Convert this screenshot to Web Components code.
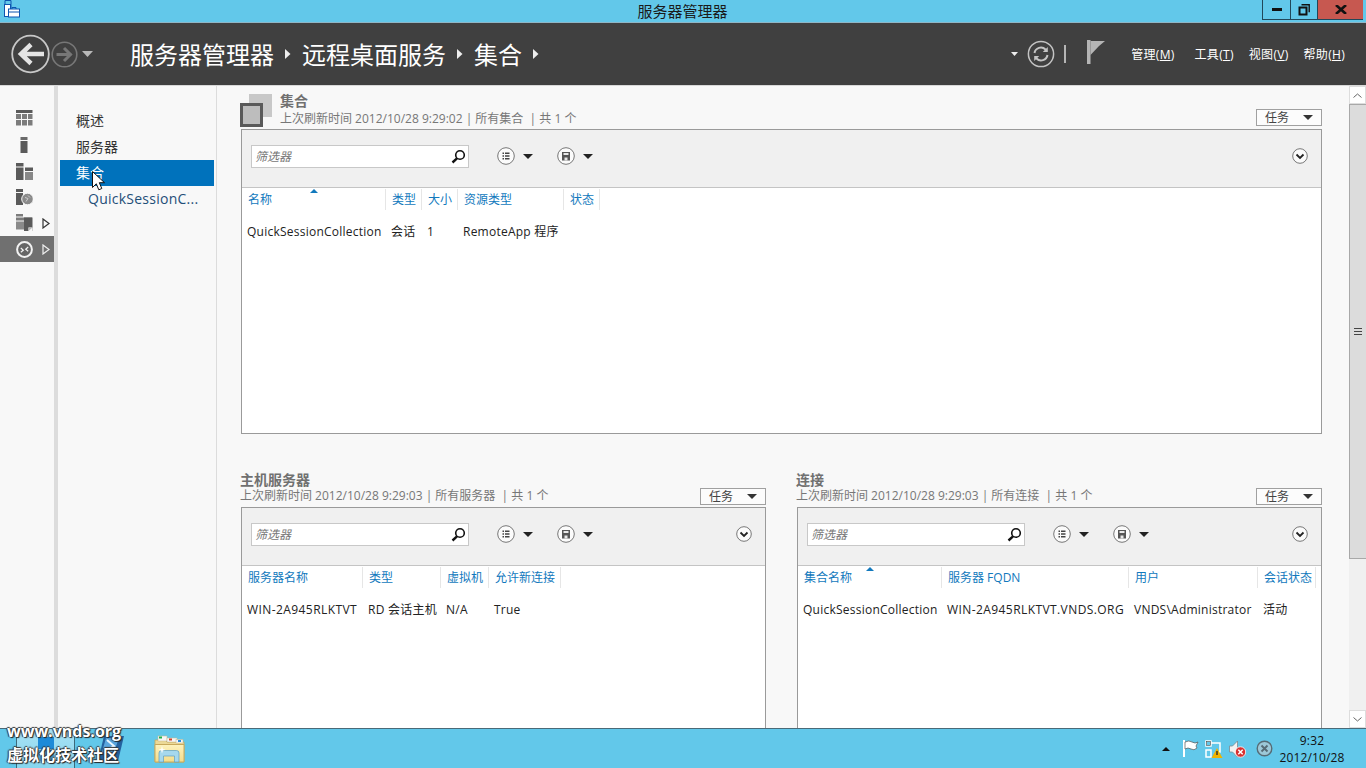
<!DOCTYPE html>
<html lang="zh-CN"><head><meta charset="utf-8"><title>服务器管理器</title>
<style>
html,body{margin:0;padding:0;height:100%;overflow:hidden}
body{width:1366px;height:768px;display:flex;flex-direction:column;position:relative;font:12px "Open Sans","Noto Sans CJK SC",sans-serif;color:#222;background:#f8f8f8}
.body{flex:1;display:flex;min-height:0;border-top:1px solid #d8d8d8}
</style></head><body>
<win-titlebar>服务器管理器</win-titlebar>
<nav-header></nav-header>
<div class="body">
  <icon-rail></icon-rail>
  <nav-list></nav-list>
  <main-area>
    <tile-section icon title="集合" sub="上次刷新时间 2012/10/28 9:29:02 | 所有集合  | 共 1 个" style="width:1081px">
      <data-grid h="305" cols="名称:144:sort|类型:36|大小:36|资源类型:106|状态:36" row="QuickSessionCollection|会话|1|RemoteApp 程序"></data-grid>
    </tile-section>
    <two-cols>
      <tile-section title="主机服务器" sub="上次刷新时间 2012/10/28 9:29:03 | 所有服务器  | 共 1 个" style="width:525px">
        <data-grid h="300" cols="服务器名称:121|类型:78|虚拟机:48|允许新连接:72" row="WIN-2A945RLKTVT|RD 会话主机|N/A|True"></data-grid>
      </tile-section>
      <tile-section title="连接" sub="上次刷新时间 2012/10/28 9:29:03 | 所有连接  | 共 1 个" style="width:525px">
        <data-grid h="300" cols="集合名称:144:sort|服务器 FQDN:187|用户:129|会话状态:58" row="QuickSessionCollection|WIN-2A945RLKTVT.VNDS.ORG|VNDS\Administrator|活动"></data-grid>
      </tile-section>
    </two-cols>
  </main-area>
  <v-scroll></v-scroll>
</div>
<task-bar></task-bar>
<water-mark></water-mark>
<mouse-cursor></mouse-cursor>
<script>
const FONT='"Open Sans","Noto Sans CJK SC",sans-serif';
function def(name,html){
  customElements.define(name,class extends HTMLElement{
    connectedCallback(){ if(this.shadowRoot) return;
      const s=this.attachShadow({mode:'open'});
      s.innerHTML=typeof html==='function'?html(this):html;
    }
  });
}
def('win-titlebar',`<style>
:host{display:flex;height:23px;flex:none;background:#62c8ea;box-sizing:border-box;border-bottom:1px solid #8fb6c6;position:relative;font:15px ${FONT};color:#1a1a1a}
.ic{width:18px;height:18px;margin:0 0 0 2px;flex:none}
.t{position:absolute;left:0;right:1px;top:2px;text-align:center;line-height:18px;}
.ctl{margin-left:auto;margin-right:3px;display:flex;height:20px;position:relative;box-sizing:border-box;border:1px solid #21485a;border-top:0;border-right:0}
.ctl div{display:flex;align-items:center;justify-content:center;box-sizing:border-box}
.a{width:28px;border-right:1px solid #21485a}.b{width:26px}.c{width:46px;background:#c75850;border-left:1px solid #21485a}
</style>
<svg class="ic" viewBox="0 0 18 18"><path d="M3 .5h6v4H3zM3 4.500h6v4H3z" fill="#62c8ea" stroke="#0d55b0"/><rect x="2.500" y="4.500" width="6" height="12" fill="#fff" stroke="#0d55b0"/><rect x="6.500" y="9" width="11" height="8" fill="#fff" stroke="#0d55b0"/><path d="M10 9V7.500h4V9M7 12h10" stroke="#0d55b0" fill="none"/></svg>
<div class="t"><slot></slot></div>
<div class="ctl"><div class="a"><svg width="10" height="3"><rect width="10" height="3" fill="#111"/></svg></div>
<div class="b"><svg width="12" height="12" viewBox="0 0 12 12"><path d="M3.500 .8h7.700v7.500" fill="none" stroke="#111" stroke-width="1.400"/><rect x="1.500" y="3.500" width="7" height="7" fill="none" stroke="#111" stroke-width="2"/></svg></div>
<div class="c"><svg width="12" height="9" viewBox="0 0 12 9"><path d="M1 0l10 9M11 0L1 9" stroke="#111" stroke-width="2.600"/></svg></div></div>`);

def('nav-header',`<style>
:host{display:flex;align-items:center;height:62px;flex:none;background:#404040;color:#fff;font:12px ${FONT};box-sizing:border-box;padding-left:11px}
svg{flex:none;display:block}
.crumb{font-size:24px;line-height:32px;color:#fff;margin-top:1px}
.arr{margin:0 11px 0 11px}
.m{display:flex;align-items:center;margin-left:auto;margin-right:21px;}
.menu{white-space:nowrap;color:#fff;font-size:12px;letter-spacing:.3px}
u{text-underline-offset:1px}
</style>
<svg width="40" height="40" viewBox="0 0 40 40"><circle cx="19.500" cy="20" r="18.300" fill="none" stroke="#c8c8c8" stroke-width="1.800"/><path d="M33 20H11M20 10.500L10 20l10 9.500" fill="none" stroke="#e4e4e4" stroke-width="4.500"/></svg>
<svg style="margin-left:0" width="27" height="27" viewBox="0 0 27 27"><circle cx="13.500" cy="13.500" r="12.300" fill="none" stroke="#777" stroke-width="1.600"/><path d="M5.500 13.500h15M13 7l6.500 6.500L13 20" fill="none" stroke="#777" stroke-width="3"/></svg>
<svg style="margin:0 37px 0 4px" width="11" height="6"><path d="M0 0h11L5.500 6z" fill="#b8b8b8"/></svg>
<span class="crumb">服务器管理器</span>
<svg class="arr" width="6" height="10" style="margin-left:11px"><path d="M0 0l5.500 5L0 10z" fill="#eee"/></svg>
<span class="crumb" style="margin-left:0">远程桌面服务</span>
<svg class="arr" width="6" height="10"><path d="M0 0l5.500 5L0 10z" fill="#eee"/></svg>
<span class="crumb">集合</span>
<svg class="arr" width="6" height="10"><path d="M0 0l5.500 5L0 10z" fill="#eee"/></svg>
<div class="m">
<svg width="7" height="4" style="margin-right:9px"><path d="M0 0h7L3.500 4z" fill="#eee"/></svg>
<svg width="28" height="28" viewBox="0 0 28 28"><circle cx="14" cy="14" r="12.600" fill="none" stroke="#c4c4c4" stroke-width="1.500"/><path d="M7.500 13a6.500 6.500 0 0 1 11-3.500l1 1.500M20.500 15a6.500 6.500 0 0 1-11 3.500l-1-1.500" fill="none" stroke="#c4c4c4" stroke-width="2"/><path d="M20.800 7v5h-5zM7.200 21v-5h5z" fill="#c4c4c4"/></svg>
<svg width="2" height="18" style="margin:0 21px 0 9px"><rect width="2" height="18" fill="#b5b5b5"/></svg>
<svg width="18" height="24" viewBox="0 0 18 24" style="margin-right:26px;margin-top:-4px"><rect width="3.500" height="24" fill="#b5b5b5"/><path d="M3.500 1H18l-6 5-8.500 9z" fill="#b5b5b5"/></svg>
<span class="menu">管理(<u>M</u>)</span><span class="menu" style="margin-left:20px">工具(<u>T</u>)</span><span class="menu" style="margin-left:15px">视图(<u>V</u>)</span><span class="menu" style="margin-left:15px">帮助(<u>H</u>)</span>
</div>`);

const tri=(c)=>`<svg class="t" width="8" height="11" viewBox="0 0 8 11"><path d="M1 1l6 4.500L1 10z" fill="none" stroke="${c}" stroke-width="1.200"/></svg>`;
def('icon-rail',`<style>
:host{display:block;width:58px;flex:none;box-sizing:border-box;border-right:4px solid #dcdcdc;padding-top:20px;background:#f8f8f8}
.r{height:26px;display:flex;align-items:center;padding-left:16px;position:relative;box-sizing:border-box}
.r svg:first-child{display:block}
.up svg:first-child{margin-top:-2px}
.t{position:absolute;left:42px;top:8px}
.sel{background:#707070;height:26px}
</style>
<div class="r up"><svg width="17" height="16" viewBox="0 0 17 16"><path d="M0 0h16.500v3H0z" fill="#5a5a5a"/><path d="M0 4h5v5H0zM6 4h5v5H6zM12 4h4.500v5H12zM0 10h5v5.500H0zM6 10h5v5.500H6zM12 10h4.500v5.500H12z" fill="#7c7c7c"/></svg></div>
<div class="r"><svg width="17" height="16" viewBox="0 0 17 16"><path d="M4.500 0h7v3h-7z" fill="#6a6a6a"/><path d="M4.500 4h7v12h-7z" fill="#5a5a5a"/></svg></div>
<div class="r"><svg width="17" height="17" viewBox="0 0 17 17"><path d="M0 0h7.500v3.500H0z" fill="#5a5a5a"/><path d="M0 4.500h7.500V17H0z" fill="#5a5a5a"/><path d="M9 4.500h8V8H9z" fill="#5a5a5a"/><path d="M9 9h8v8H9z" fill="#888"/></svg></div>
<div class="r"><svg width="17" height="17" viewBox="0 0 17 17"><path d="M0 0h7v3H0z" fill="#5a5a5a"/><path d="M0 4h7v12H0z" fill="#5a5a5a"/><circle cx="11.500" cy="10" r="5.800" fill="#8a8a8a" stroke="#f8f8f8"/><path d="M9 8.500l3 1-2 3M12 6.500l2 2" stroke="#ccc" fill="none"/></svg></div>
<div class="r up"><svg width="17" height="17" viewBox="0 0 17 17"><path d="M0 0h7v2.500H0z" fill="#7c7c7c"/><path d="M0 3.500h16v3H0z" fill="#7c7c7c"/><path d="M0 7.500h9v8H0z" fill="#8a8a8a"/><path d="M8 3.500h8.500V17H8z" fill="#5a5a5a"/><path d="M12.500 17v-3.500h4V17z" fill="#f8f8f8"/><path d="M12.500 17l4-3.500h-4z" fill="#bbb"/></svg>${tri('#333')}</div>
<div class="r sel"><svg width="17" height="17" viewBox="0 0 17 17"><circle cx="8.500" cy="8.500" r="7.400" fill="#666" stroke="#f2f2f2" stroke-width="2"/><path d="M4.800 7l2.500 2.200-2.500 2M12.200 6L9.700 8.200l2.500 2" fill="none" stroke="#f2f2f2" stroke-width="1.200"/></svg>${tri('#eee')}</div>`);

def('nav-list',`<style>
:host{display:block;width:159px;flex:none;box-sizing:border-box;border-right:1px solid #dcdcdc;padding:22px 2px 0 2px;font:14px/26px ${FONT};color:#333}
div{height:26px;padding-left:16px;white-space:nowrap}
.sel{background:#0072bc;color:#fff}
.sub{padding-left:28px;color:#1f4f78;letter-spacing:.25px}
</style>
<div>概述</div><div>服务器</div><div class="sel">集合</div><div class="sub">QuickSessionC...</div>`);

def('main-area',`<style>
:host{flex:1;display:block;min-width:0;box-sizing:border-box;padding:8px 0 0 24px;overflow:hidden;background:#f8f8f8}
</style><slot></slot>`);

def('two-cols',`<style>:host{display:flex;gap:31px;margin-top:39px}</style><slot></slot>`);

def('tile-section',h=>{const ic=h.hasAttribute('icon');return `<style>
:host{display:block;font:12px ${FONT}}
.hd{display:flex;height:${ic?35:34}px;align-items:flex-start;position:relative}
.ic{flex:none;margin:0 7px 0 -1px}
.tt{flex:1;min-width:0;${ic?'':'margin-left:-1px'}}
.title{font-weight:700;color:#707070;line-height:16px;font-size:14px;white-space:nowrap;margin:-1px 0 ${ic?1:0}px}
.sub{color:#777;line-height:${ic?17:16}px;white-space:pre}
.task{flex:none;width:66px;height:17px;box-sizing:border-box;border:1px solid #a0a0a0;background:#fcfcfc;display:flex;align-items:center;padding-left:8px;margin-top:15px;color:#444;line-height:14px}
.task svg{margin-left:auto;margin-right:8px}
</style><div class="hd">
${ic?`<svg class="ic" width="33" height="34" viewBox="0 0 33 34"><rect x="9" y="0" width="23" height="23" fill="#c8c8c8"/><rect x="1.500" y="10.500" width="20" height="21" fill="#bdbdbd" stroke="#5a5a5a" stroke-width="3"/></svg>`:''}
<div class="tt"><div class="title">${h.getAttribute('title')}</div><div class="sub">${h.getAttribute('sub')}</div></div>
<div class="task">任务<svg width="10" height="5"><path d="M0 0h10L5 5z" fill="#333"/></svg></div></div><slot></slot>`});

def('data-grid',h=>{
 const cols=h.getAttribute('cols').split('|').map(c=>c.split(':'));
 const row=h.getAttribute('row').split('|');
 const W=cols.map(c=>+c[1]);
 return `<style>
:host{display:block;box-sizing:border-box;height:${h.getAttribute('h')}px;border:1px solid #9a9a9a;background:#fff;font:12px ${FONT}}
.bar{height:58px;box-sizing:border-box;background:#f0f0f0;border-bottom:1px solid #c4c4c4;display:flex;align-items:center;padding:0 13px 5px 9px}
.f{width:218px;height:23px;box-sizing:border-box;border:1px solid #c8c8c8;background:#fff;display:flex;align-items:center;justify-content:space-between;padding:0 2px 0 3px;font-style:italic;color:#777;margin-right:28px}
.b{display:flex;align-items:center;gap:8px;margin-right:24px}
.last{margin-left:auto}
.hdr,.rw{display:flex}
.hdr{height:21px;margin-top:1px}
.hdr div{position:relative;box-sizing:border-box;padding:3px 0 0 6px;color:#1279bd;border-right:1px solid #e6e6e6;white-space:nowrap;line-height:16px;overflow:visible}
.s{position:absolute;top:0;left:50%;margin-left:-4px}
.rw{margin-top:13px;color:#222;line-height:18px}
.rw div{padding-left:5px;box-sizing:border-box;white-space:nowrap;letter-spacing:.24px}
.rw div.up{letter-spacing:.42px}
svg{display:block}
</style><div class="bar">
<div class="f">筛选器<svg width="15" height="15" viewBox="0 0 15 15"><circle cx="9" cy="6" r="4.300" fill="none" stroke="#111" stroke-width="1.600"/><path d="M6 9.300L1.500 13.500" stroke="#111" stroke-width="2.400"/></svg></div>
<div class="b"><svg width="18" height="18" viewBox="0 0 18 18"><circle cx="9" cy="9" r="8.300" fill="#fbfbfb" stroke="#777"/><path d="M5.500 5.500H7v1.500H5.500zM5.500 8.300H7v1.500H5.500zM5.500 11H7v1.500H5.500zM8 5.500h4.500v1.500H8zM8 8.300h4.500v1.500H8zM8 11h4.500v1.500H8z" fill="#444"/></svg><svg width="10" height="5"><path d="M0 0h10L5 5z" fill="#222"/></svg></div>
<div class="b"><svg width="18" height="18" viewBox="0 0 18 18"><circle cx="9" cy="9" r="8.300" fill="#fbfbfb" stroke="#777"/><path d="M5 5h8v8.500H5z" fill="#555"/><path d="M6.500 6h5v2h-5zM7.500 10.500h3v3h-3z" fill="#e8e8e8"/></svg><svg width="10" height="5"><path d="M0 0h10L5 5z" fill="#222"/></svg></div>
<svg class="last" width="16" height="16" viewBox="0 0 16 16"><circle cx="8" cy="8" r="7.300" fill="#fbfbfb" stroke="#777"/><path d="M4.500 6.500L8 10l3.500-3.500" fill="none" stroke="#222" stroke-width="1.800"/></svg>
</div>
<div class="hdr">${cols.map(c=>`<div style="width:${c[1]}px">${c[0]}${c[2]?'<svg class="s" width="8" height="4"><path d="M0 4h8L4 0z" fill="#1279bd"/></svg>':''}</div>`).join('')}</div>
<div class="rw">${row.map((t,i)=>`<div class="${/^WIN/.test(t)?'up':''}" style="width:${W[i]}px">${t}</div>`).join('')}</div>`;
});

def('v-scroll',`<style>
:host{width:17px;flex:none;display:flex;flex-direction:column;background:#f0f0f0;margin-top:0}
.btn{height:18px;background:#fff;border:1px solid #ddd;box-sizing:border-box;display:flex;align-items:center;justify-content:center;flex:none}
.th{height:455px;background:#dcdcdc;border:1px solid #a8a8a8;border-right:0;box-sizing:border-box;display:flex;align-items:center;justify-content:center;flex:none}
.gap{flex:1}
</style><div class="btn"><svg width="9" height="5" viewBox="0 0 9 5"><path d="M.5 4.500l4-3.500 4 3.500" fill="none" stroke="#666"/></svg></div>
<div class="th"><svg width="8" height="7" viewBox="0 0 8 7"><path d="M0 .5h8M0 3.500h8M0 6.500h8" stroke="#444"/></svg></div><div class="gap"></div>
<div class="btn"><svg width="9" height="5" viewBox="0 0 9 5"><path d="M.5.500l4 3.500 4-3.500" fill="none" stroke="#666"/></svg></div>`);

def('task-bar',`<style>
:host{display:flex;align-items:center;height:40px;flex:none;box-sizing:border-box;background:#62c8ea;border-top:1px solid #4a6a78;font:12px ${FONT};color:#111}
.st{width:59px;height:39px;margin-left:16px;background:linear-gradient(#a9e2f4,#86d6ef);border:solid #3d6a7a;border-width:0 1px;box-sizing:border-box;flex:none;display:flex;justify-content:center;padding-top:8px}
.ps{margin-left:22px;flex:none}.ex{margin-left:29px;flex:none}
.tray{margin-left:auto;display:flex;align-items:center}
.clk{width:72px;text-align:center;line-height:17px;margin:0 18px 0 3px;color:#111;font-size:12px;letter-spacing:.15px}
svg{display:block;flex:none}
</style>
<div class="st"><svg width="16" height="24"><rect width="16" height="12" fill="#1d8ad8"/><rect y="13" width="16" height="11" fill="#4aa6dc"/></svg></div>
<svg class="ps" width="28" height="27" viewBox="0 0 28 27"><path d="M7 1h20l-6 25H1z" fill="#24619e"/><path d="M9 3h13l-5 14H5z" fill="#5aa6de"/><path d="M10 5l7 6-9 5" fill="none" stroke="#e8f6ff" stroke-width="2"/></svg>
<svg class="ex" width="32" height="30" viewBox="0 0 32 30"><defs><linearGradient id="fg" x1="0" y1="0" x2="0" y2="1"><stop offset="0" stop-color="#fdf2bd"/><stop offset="1" stop-color="#f5dc8a"/></linearGradient></defs><path d="M1 6h10l2 2h17v20H1z" fill="#ecd996" stroke="#c8a95c" stroke-width=".8"/><rect x="4" y="2" width="9" height="5" fill="#f6f6f6" stroke="#c8b88a" stroke-width=".5"/><rect x="5" y="2.500" width="3" height="2" fill="#22b14c"/><rect x="13" y="4" width="10" height="4" fill="#f6f6f6" stroke="#c8b88a" stroke-width=".5"/><rect x="15" y="4.500" width="3" height="2" fill="#d8442a"/><rect x="22" y="5.500" width="7" height="3.500" fill="#f6f6f6" stroke="#c8b88a" stroke-width=".5"/><rect x="24" y="6" width="3" height="2" fill="#2a8ad8"/><path d="M1 10.500h29V28H1z" fill="url(#fg)" stroke="#c8a95c"/><path d="M5 28V19q0-2.500 2.500-2.500h15q2.500 0 2.500 2.500v9h-4.500v-6h-11v6z" fill="#a6d8ee" stroke="#5f9fc0" stroke-width=".7"/><path d="M8 12l.8 3 3 .8-3 .8-.8 3-.8-3-3-.8 3-.8z" fill="#fff"/></svg>
<div class="tray">
<svg width="8" height="4" style="margin-right:13px"><path d="M0 4h8L4 0z" fill="#111"/></svg>
<svg width="16" height="17" viewBox="0 0 16 17" style="margin-right:6px"><path d="M1 0v17" stroke="#fff" stroke-width="2"/><path d="M2 2q4-2 7 0t6 0l-2 4 1 2q-3 3-6 1t-6 0z" fill="#fff" stroke="#555" stroke-width=".7"/></svg>
<svg width="18" height="18" viewBox="0 0 18 18" style="margin-right:6px"><path d="M1 1h5v5H1zM1 10h5v7H1zM6 3h9v9h-4" fill="none" stroke="#fff" stroke-width="1.500"/><rect x="1.500" y="1.500" width="4" height="4" fill="none" stroke="#444" stroke-width=".6"/><path d="M12 8l5.500 10h-11z" fill="#f0b400"/><path d="M12 11v4" stroke="#222" stroke-width="1.300"/></svg>
<svg width="17" height="18" viewBox="0 0 17 18" style="margin-right:10px"><path d="M.5 6h3l5-5v16l-5-5h-3z" fill="#f2f2f2" stroke="#7a8a90" stroke-width=".8"/><circle cx="11.500" cy="12" r="5.200" fill="#d83030" stroke="#fff" stroke-width=".8"/><path d="M9.300 9.800l4.400 4.400m0-4.400l-4.400 4.400" stroke="#fff" stroke-width="1.500"/></svg>
<svg width="17" height="17" viewBox="0 0 17 17"><circle cx="8.500" cy="8.500" r="7.300" fill="#9cc8d8" stroke="#566b75" stroke-width="1.400"/><path d="M5.500 5.500l6 6m0-6l-6 6" stroke="#566b75" stroke-width="1.900"/></svg>
<div class="clk">9:32<br>2012/10/28</div>
</div>`);

def('water-mark',`<style>
:host{position:absolute;left:7px;top:721px;font:700 16px/20px ${FONT};color:#fff;text-shadow:1px 1px 1px #222,-1px 0 1px #333,0 -1px 1px #333;white-space:nowrap}
div+div{margin-top:4px}
</style><div>www.vnds.org</div><div>虚拟化技术社区</div>`);

def('mouse-cursor',`<style>:host{position:absolute;left:92px;top:171px;display:block}svg{display:block}</style>
<svg width="13" height="20" viewBox="0 0 13 20"><path d="M.5.500v16l3.800-3.700 2.500 6 3-1.300-2.500-5.800h5.200z" fill="#fff" stroke="#111"/></svg>`);
</script>
</body></html>
